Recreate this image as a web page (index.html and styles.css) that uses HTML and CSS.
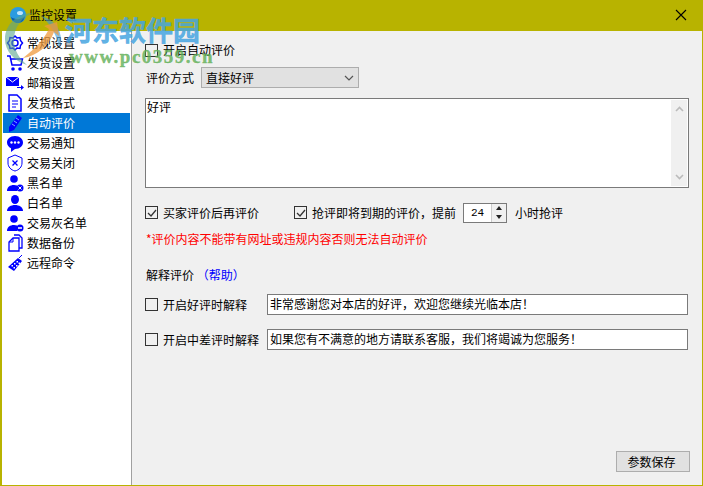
FILE: index.html
```html
<!DOCTYPE html>
<html lang="zh">
<head>
<meta charset="utf-8">
<title>监控设置</title>
<link rel="stylesheet" href="styles.css">
</head>
<body>
<div class="window">
  <header class="titlebar">
    <svg class="app-icon" width="18" height="18" viewBox="0 0 18 18"><circle cx="9" cy="9" r="8" fill="#2a9be0"/><path d="M2 11c4 3 10 3 14-1-1 5-4 7-7 7-3 0-6-2-7-6z" fill="#0d5fa8"/><ellipse cx="11" cy="7" rx="3" ry="2" fill="#bfe6fb"/></svg>
    <span class="title">监控设置</span>
    <svg class="close" width="12" height="12" viewBox="0 0 12 12"><path d="M1 1l10 10M11 1L1 11" stroke="#000" stroke-width="1.1" fill="none"/></svg>
  </header>
  <div class="body">
    <nav class="sidebar">
      <div class="nav-item"><svg class="ico" viewBox="0 0 18 18"><path d="M9 2l2 2 3-.5.5 3 2 2.500-2 2.500-.5 3-3-.5-2 2-2-2-3 .5-.5-3-2-2.500 2-2.500.5-3 3 .5z" fill="none" stroke="#00f" stroke-width="1.500"/><circle cx="9" cy="9" r="3" fill="none" stroke="#00f" stroke-width="1.500"/></svg><span>常规设置</span></div>
      <div class="nav-item"><svg class="ico" viewBox="0 0 18 18"><path d="M1 2h3l2 9h9l1.500-6H5" fill="none" stroke="#00f" stroke-width="1.500"/><circle cx="7" cy="15" r="1.800" fill="#00f"/><circle cx="14" cy="15" r="1.800" fill="#00f"/></svg><span>发货设置</span></div>
      <div class="nav-item"><svg class="ico" viewBox="0 0 18 18"><path d="M0 3h13v9H0z" fill="#00f"/><path d="M0 3l6.500 5L13 3" fill="none" stroke="#fff"/><path d="M11 13h4v-2l3 2.500-3 2.500v-2h-4z" fill="#00f"/></svg><span>邮箱设置</span></div>
      <div class="nav-item"><svg class="ico" viewBox="0 0 18 18"><path d="M3 1h8l4 4v12H3z" fill="#fff" stroke="#00f" stroke-width="1.500"/><path d="M6 7h6M6 10h6M6 13h4" stroke="#00f" stroke-width="1.200"/></svg><span>发货格式</span></div>
      <div class="nav-item selected"><svg class="ico" viewBox="0 0 18 18"><path d="M12 1l4 3-8 12-5 2 0-5z" fill="#00f"/><path d="M6 10l3 2M8 7l3 2M10 4l3 2" stroke="#7fb2ff"/></svg><span>自动评价</span></div>
      <div class="nav-item"><svg class="ico" viewBox="0 0 18 18"><path d="M9 2c5 0 8 3 8 6.500S14 15 9 15l-4 3v-3.800C2.500 13 1 11 1 8.500 1 5 4 2 9 2z" fill="#00f"/><circle cx="5.500" cy="8.500" r="1.200" fill="#fff"/><circle cx="9" cy="8.500" r="1.200" fill="#fff"/><circle cx="12.500" cy="8.500" r="1.200" fill="#fff"/></svg><span>交易通知</span></div>
      <div class="nav-item"><svg class="ico" viewBox="0 0 18 18"><path d="M9 1l7 3v5c0 4-3 7-7 8-4-1-7-4-7-8V4z" fill="none" stroke="#00f" stroke-width="1"/><path d="M6.500 6.500l5 5M11.500 6.500l-5 5" stroke="#00f" stroke-width="1.300"/></svg><span>交易关闭</span></div>
      <div class="nav-item"><svg class="ico" viewBox="0 0 18 18"><circle cx="8" cy="5" r="3.800" fill="#00f"/><path d="M1 17c0-4 3-6 7-6 1 0 2 .2 3 .5V17z" fill="#00f"/><circle cx="14" cy="14" r="3.500" fill="#00f"/><path d="M12.500 12.500l3 3M15.500 12.500l-3 3" stroke="#fff"/></svg><span>黑名单</span></div>
      <div class="nav-item"><svg class="ico" viewBox="0 0 18 18"><ellipse cx="9" cy="5.500" rx="4" ry="4.500" fill="#00f"/><path d="M1 17c0-4 4-6 8-6s8 2 8 6z" fill="#00f"/></svg><span>白名单</span></div>
      <div class="nav-item"><svg class="ico" viewBox="0 0 18 18"><circle cx="8" cy="5" r="3.800" fill="#00f"/><path d="M1 17c0-4 3-6 7-6 1 0 2 .2 3 .5V17z" fill="#00f"/><circle cx="14" cy="14" r="3.500" fill="#00f"/><path d="M12 14h4" stroke="#fff" stroke-width="1.500"/></svg><span>交易灰名单</span></div>
      <div class="nav-item"><svg class="ico" viewBox="0 0 18 18"><path d="M8 1h5l3 3v10h-3" fill="none" stroke="#00f" stroke-width="1.300"/><path d="M7 4L3 8v9h10V4z" fill="#fff" stroke="#00f" stroke-width="1.300"/><path d="M7 4v4H3" fill="none" stroke="#00f"/></svg><span>数据备份</span></div>
      <div class="nav-item"><svg class="ico" viewBox="0 0 18 18"><path d="M12 4l4 3-8 10-6-4z" fill="#00f"/><path d="M13 4l3-3" stroke="#00f"/><g fill="#fff"><rect x="5.500" y="11" width="1.500" height="1.500"/><rect x="8" y="9" width="1.500" height="1.500"/><rect x="10.500" y="7" width="1.500" height="1.500"/><rect x="7.500" y="13" width="1.500" height="1.500"/><rect x="10" y="11" width="1.500" height="1.500"/><rect x="12.500" y="8.500" width="1.500" height="1.500"/></g></svg><span>远程命令</span></div>
    </nav>
    <main class="panel">
      <label class="check first"><span class="box"></span><span>开启自动评价</span></label>
      <div class="method">
        <span>评价方式</span>
        <div class="select"><span>直接好评</span><svg width="10" height="6" viewBox="0 0 10 6"><path d="M1 1l4 4 4-4" fill="none" stroke="#555" stroke-width="1.200"/></svg></div>
      </div>
      <div class="textarea">
        <span>好评</span>
        <div class="scroll">
          <svg width="9" height="6" viewBox="0 0 9 6"><path d="M1 5l3.500-3.500L8 5" fill="none" stroke="#bbb" stroke-width="1.600"/></svg>
          <svg width="9" height="6" viewBox="0 0 9 6"><path d="M1 1l3.500 3.500L8 1" fill="none" stroke="#bbb" stroke-width="1.600"/></svg>
        </div>
      </div>
      <div class="options">
        <label class="check opt-a"><span class="box checked"><svg width="10" height="10" viewBox="0 0 10 10"><path d="M1 5l3 3 5-6" fill="none" stroke="#333" stroke-width="1.300"/></svg></span><span>买家评价后再评价</span></label>
        <label class="check"><span class="box checked"><svg width="10" height="10" viewBox="0 0 10 10"><path d="M1 5l3 3 5-6" fill="none" stroke="#333" stroke-width="1.300"/></svg></span><span>抢评即将到期的评价，提前</span></label>
        <div class="spin"><span class="spin-val">24</span><span class="spin-btns"><i class="up"></i><i class="down"></i></span></div>
        <span class="hours">小时抢评</span>
      </div>
      <p class="warn">*评价内容不能带有网址或违规内容否则无法自动评价</p>
      <p class="explain">解释评价 <a class="help">（帮助）</a></p>
      <div class="reply">
        <label class="check reply-label"><span class="box"></span><span>开启好评时解释</span></label>
        <div class="input">非常感谢您对本店的好评，欢迎您继续光临本店！</div>
      </div>
      <div class="reply second">
        <label class="check reply-label"><span class="box"></span><span>开启中差评时解释</span></label>
        <div class="input">如果您有不满意的地方请联系客服，我们将竭诚为您服务！</div>
      </div>
      <div class="actions"><button class="save">参数保存</button></div>
    </main>
  </div>
  <div class="watermark">
    <svg class="wm-logo" width="64" height="58" viewBox="0 0 64 58"><path d="M30 5C14 5 2 17 2 31c0 12 9 22 22 26-8-7-13-15-13-25C11 19 19 9 30 5z" fill="#5aa58c" opacity=".6"/><path d="M38 8c12 3 20 12 20 24 0 3-1 6-2 8-2-12-8-24-18-32z" fill="#3a9ad9" opacity=".6"/><path d="M20 50c14-2 26-12 31-26l5 4-2-14-13 4 5 3c-5 10-14 20-26 29z" fill="#ef9a3c" opacity=".75"/></svg>
    <span class="wm-name">河东软件园</span>
    <span class="wm-url">www.pc0359.cn</span>
  </div>
</div>
</body>
</html>
```
FILE: styles.css
```css
* { box-sizing: border-box; }
html, body { margin: 0; padding: 0; }
body {
  width: 703px;
  height: 486px;
  overflow: hidden;
  font-family: "Noto Sans CJK SC", "Liberation Sans", sans-serif;
  font-size: 12px;
  color: #000;
}
.window {
  position: relative;
  width: 703px;
  height: 486px;
  display: flex;
  flex-direction: column;
  background: #b8b300;
  padding: 0 1px 1px 2px;
}
.titlebar {
  height: 31px;
  flex: none;
  display: flex;
  align-items: center;
  padding-left: 7px;
  padding-right: 15px;
}
.app-icon { margin-right: 2px; margin-top: -2px; }
.title { flex: 1; margin-top: -2px; }
.close { margin-top: -1px; }
.body { flex: 1; display: flex; min-height: 0; background: #f0f0f0; }
.sidebar {
  width: 130px;
  flex: none;
  background: #fff;
  border-right: 1px solid #a0a0a0;
  padding: 2px 1px 0;
}
.nav-item {
  height: 20px;
  display: flex;
  align-items: center;
  padding-left: 3px;
  gap: 3px;
  line-height: 20px;
}
.nav-item.selected { background: #0078d7; color: #fff; }
.ico { width: 18px; height: 18px; flex: none; }
.panel {
  flex: 1;
  padding: 0 0 0 13px;
  display: flex;
  flex-direction: column;
  min-width: 0;
}
.check { display: flex; align-items: center; gap: 5px; line-height: 16px; }
.box {
  width: 13px;
  height: 13px;
  flex: none;
  border: 1px solid #333;
  background: transparent;
  display: flex;
  align-items: center;
  justify-content: center;
}
.first { margin-top: 11px; height: 16px; }
.method { display: flex; align-items: center; margin-top: 9px; padding-left: 1px; gap: 6px; height: 21px; }
.select {
  width: 158px;
  height: 21px;
  margin-left: 1px;
  background: #e1e1e1;
  border: 1px solid #adadad;
  display: flex;
  align-items: center;
  justify-content: space-between;
  padding: 0 4px;
}
.textarea {
  position: relative;
  margin-top: 10px;
  width: 544px;
  height: 90px;
  background: #fff;
  border: 1px solid #7a7a7a;
  padding: 0 1px;
  line-height: 16px;
}
.scroll {
  position: absolute;
  top: 1px;
  right: 1px;
  bottom: 1px;
  width: 16px;
  background: #f0f0f0;
  display: flex;
  flex-direction: column;
  justify-content: space-between;
  align-items: center;
  padding: 6px 0;
}
.options { display: flex; align-items: center; margin-top: 14px; height: 21px; }
.opt-a { width: 149px; }
.spin {
  width: 44px;
  height: 20px;
  margin-left: 7px;
  background: #fff;
  border: 1px solid #7a7a7a;
  display: flex;
  align-items: center;
  font-family: "Liberation Mono", monospace;
}
.spin-val { flex: 1; text-align: center; font-size: 11px; }
.spin-btns { width: 15px; height: 100%; display: flex; flex-direction: column; border-left: 1px solid #ccc; background: #f0f0f0; }
.spin-btns i { flex: 1; display: flex; align-items: center; justify-content: center; }
.up::before { content: ""; border: 3px solid transparent; border-top: 0; border-bottom: 4px solid #222; }
.down::before { content: ""; border: 3px solid transparent; border-bottom: 0; border-top: 4px solid #222; }
.hours { margin-left: 8px; }
.warn { margin: 8px 0 0 1px; color: #f00; line-height: 16px; }
.explain { margin: 20px 0 0 1px; line-height: 16px; }
.help { color: #00f; }
.reply { display: flex; align-items: center; margin-top: 11px; height: 21px; }
.reply.second { margin-top: 14px; }
.reply-label { width: 122px; flex: none; }
.input {
  width: 421px;
  height: 21px;
  background: #fff;
  border: 1px solid #7a7a7a;
  padding: 0 2px;
  line-height: 18px;
  white-space: nowrap;
  overflow: hidden;
}
.actions { margin-top: auto; display: flex; justify-content: flex-end; padding: 0 12px 13px 0; }
.save {
  width: 74px;
  height: 21px;
  padding: 0 3px 0 0;
  background: #e1e1e1;
  border: 1px solid #adadad;
  font: inherit;
  color: #000;
}
.watermark { position: absolute; inset: 0; pointer-events: none; }
.wm-logo { position: absolute; left: 3px; top: 8px; }
.wm-name {
  position: absolute;
  left: 65px;
  top: 12px;
  font: bold 27px/36px "Noto Sans CJK SC", serif;
  -webkit-text-stroke: .5px rgba(70, 165, 225, .85);
  color: rgba(70, 165, 225, .85);
}
.wm-url {
  position: absolute;
  left: 69px;
  top: 47px;
  font: bold 19px/20px "Liberation Serif", serif;
  -webkit-text-stroke: .4px rgba(95, 175, 85, .8);
  color: rgba(95, 175, 85, .8);
  letter-spacing: 1.5px;
}
```
